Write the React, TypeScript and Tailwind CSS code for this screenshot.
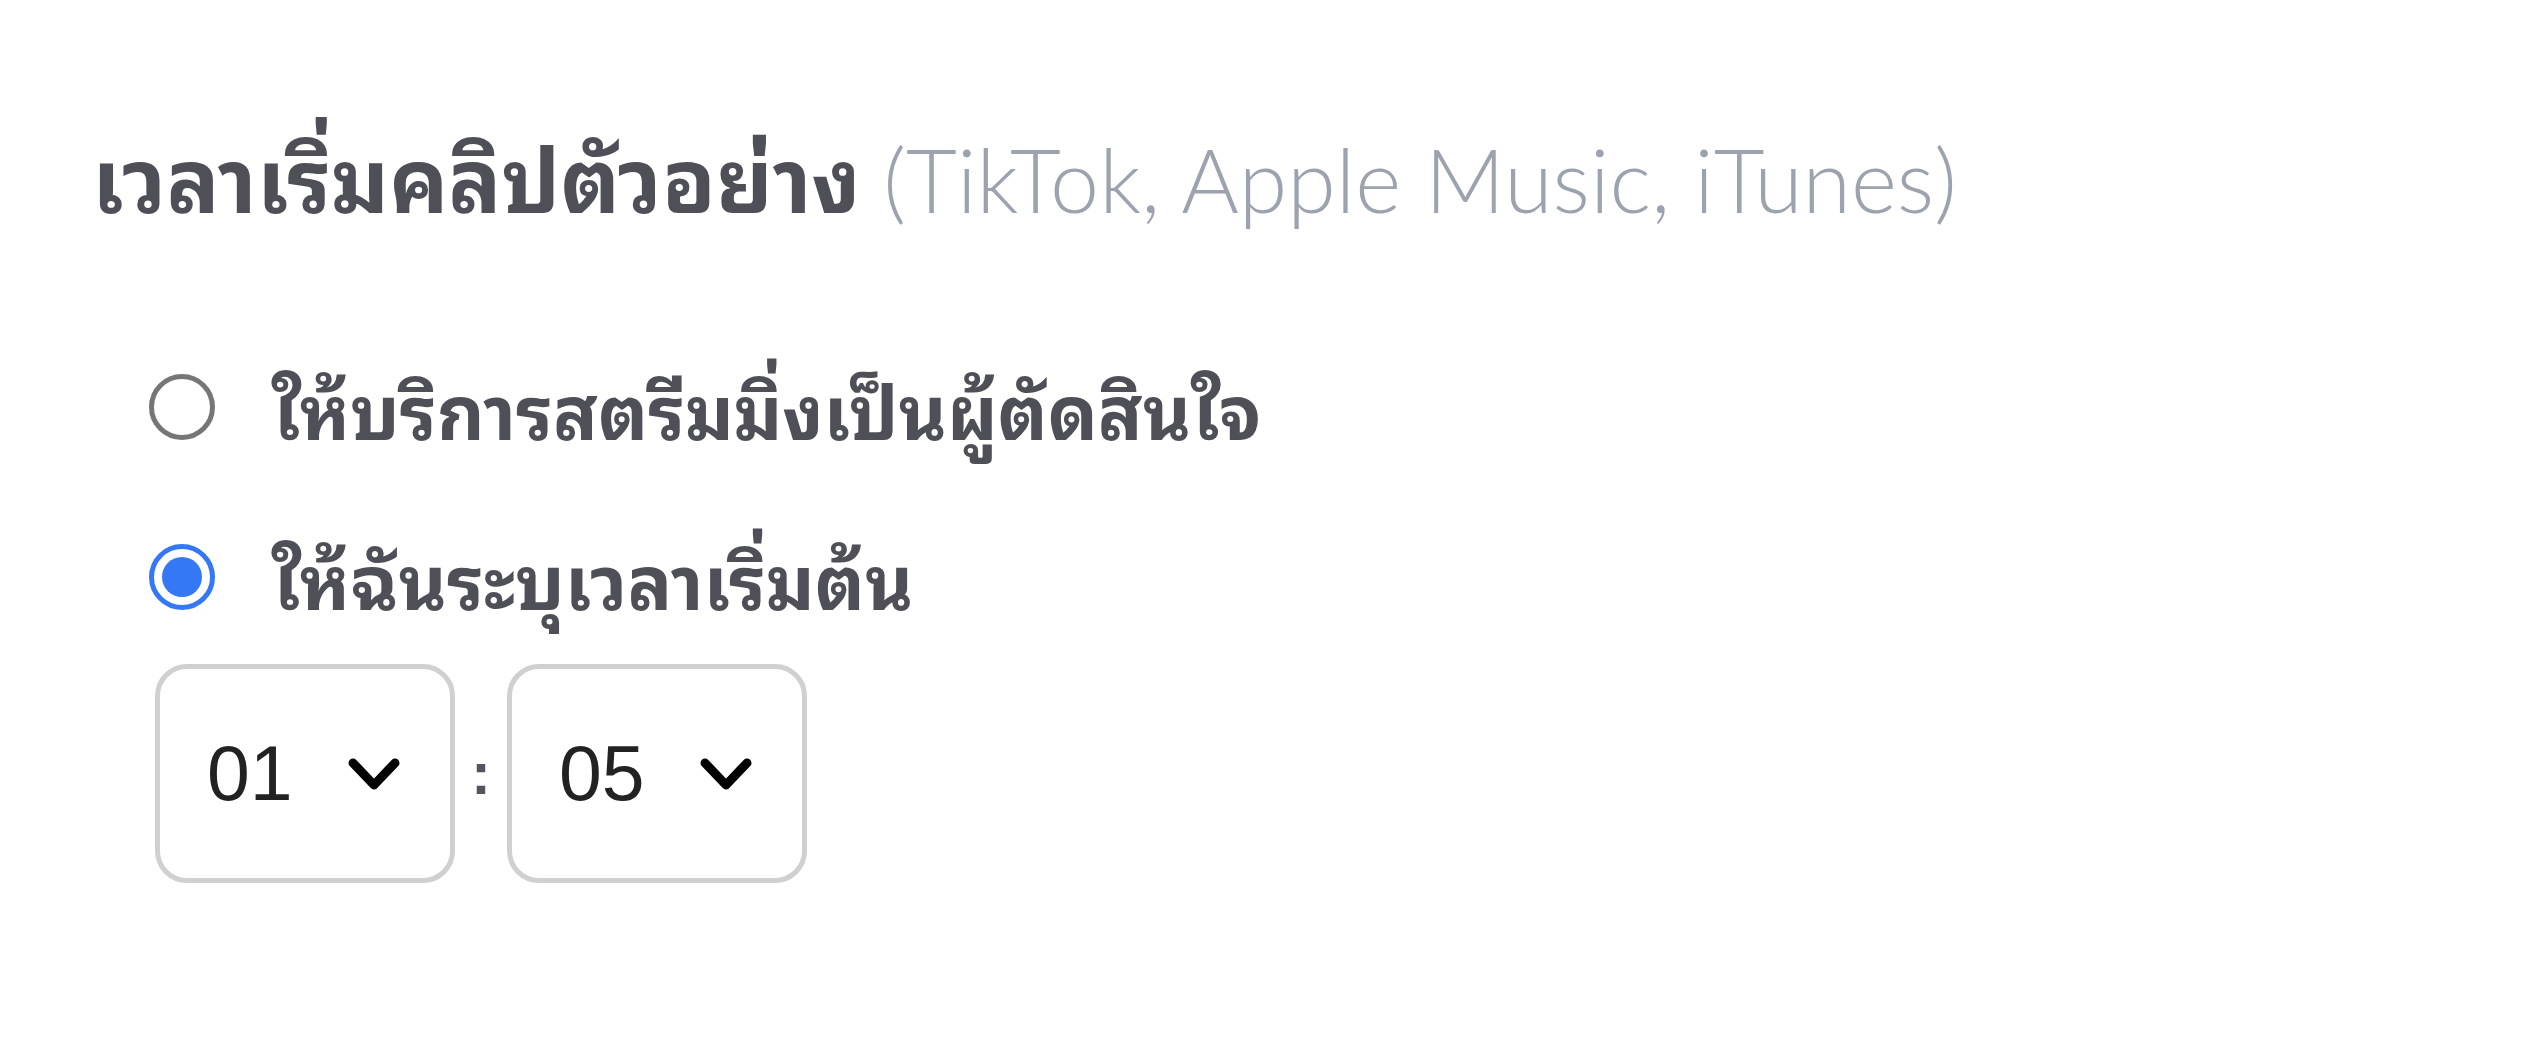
import { useState } from 'react';

const THAI = '"Noto Sans Thai Looped", "Noto Looped Thai", "Noto Serif Thai", "Noto Sans Thai", "Noto Sans", "Liberation Sans", sans-serif';

const Radio = ({ checked }: { checked: boolean }) => (
  <span
    className={`flex h-[66px] w-[66px] shrink-0 items-center justify-center rounded-full border-[5px] ${
      checked ? 'border-[#3478f6]' : 'border-[#767676]'
    }`}
  >
    {checked && <span className="h-[40px] w-[40px] rounded-full bg-[#3478f6]" />}
  </span>
);

const TimeSelect = ({ value }: { value: string }) => (
  <div className="flex h-[219px] w-[300px] items-center justify-between rounded-[32px] border-[5px] border-[#d0d0d0] bg-white pl-[47px] pr-[50px]">
    <span className="text-[77px] leading-none text-[#222]" style={{ fontFamily: '"Liberation Sans", Arial, sans-serif' }}>
      {value}
    </span>
    <svg width="52" height="32" viewBox="0 0 52 32" fill="none">
      <path d="M5 5 L26 27 L47 5" stroke="#000" strokeWidth="9" strokeLinecap="round" strokeLinejoin="round" />
    </svg>
  </div>
);

export default function App() {
  const [mode, setMode] = useState<'auto' | 'manual'>('manual');

  return (
    <div className="min-h-screen bg-white px-[92px] pt-[114px]" style={{ fontFamily: THAI }}>
      <h2 className="text-[88px] font-bold leading-[120px] text-[#4f4f57]">
        เวลาเริ่มคลิปตัวอย่าง{' '}
        <span className="font-light text-[#9ca3af]" style={{ fontFamily: 'Lato, sans-serif' }}>
          (TikTok, Apple Music, iTunes)
        </span>
      </h2>

      <div className="mt-[108px] flex flex-col gap-[50px] pl-[57px]">
        <label className="flex cursor-pointer items-center gap-[57px]" onClick={() => setMode('auto')}>
          <Radio checked={mode === 'auto'} />
          <span className="text-[74px] font-bold leading-[120px] text-[#4f4f57]">ให้บริการสตรีมมิ่งเป็นผู้ตัดสินใจ</span>
        </label>
        <label className="flex cursor-pointer items-center gap-[57px]" onClick={() => setMode('manual')}>
          <Radio checked={mode === 'manual'} />
          <span className="text-[74px] font-bold leading-[120px] text-[#4f4f57]">ให้ฉันระบุเวลาเริ่มต้น</span>
        </label>
      </div>

      <div className="mt-[27px] flex items-center gap-[16px] pl-[63px]">
        <TimeSelect value="01" />
        <span
          className="text-[60px] font-bold leading-none text-[#55555f]"
          style={{ fontFamily: '"Liberation Sans", Arial, sans-serif' }}
        >
          :
        </span>
        <TimeSelect value="05" />
      </div>
    </div>
  );
}
